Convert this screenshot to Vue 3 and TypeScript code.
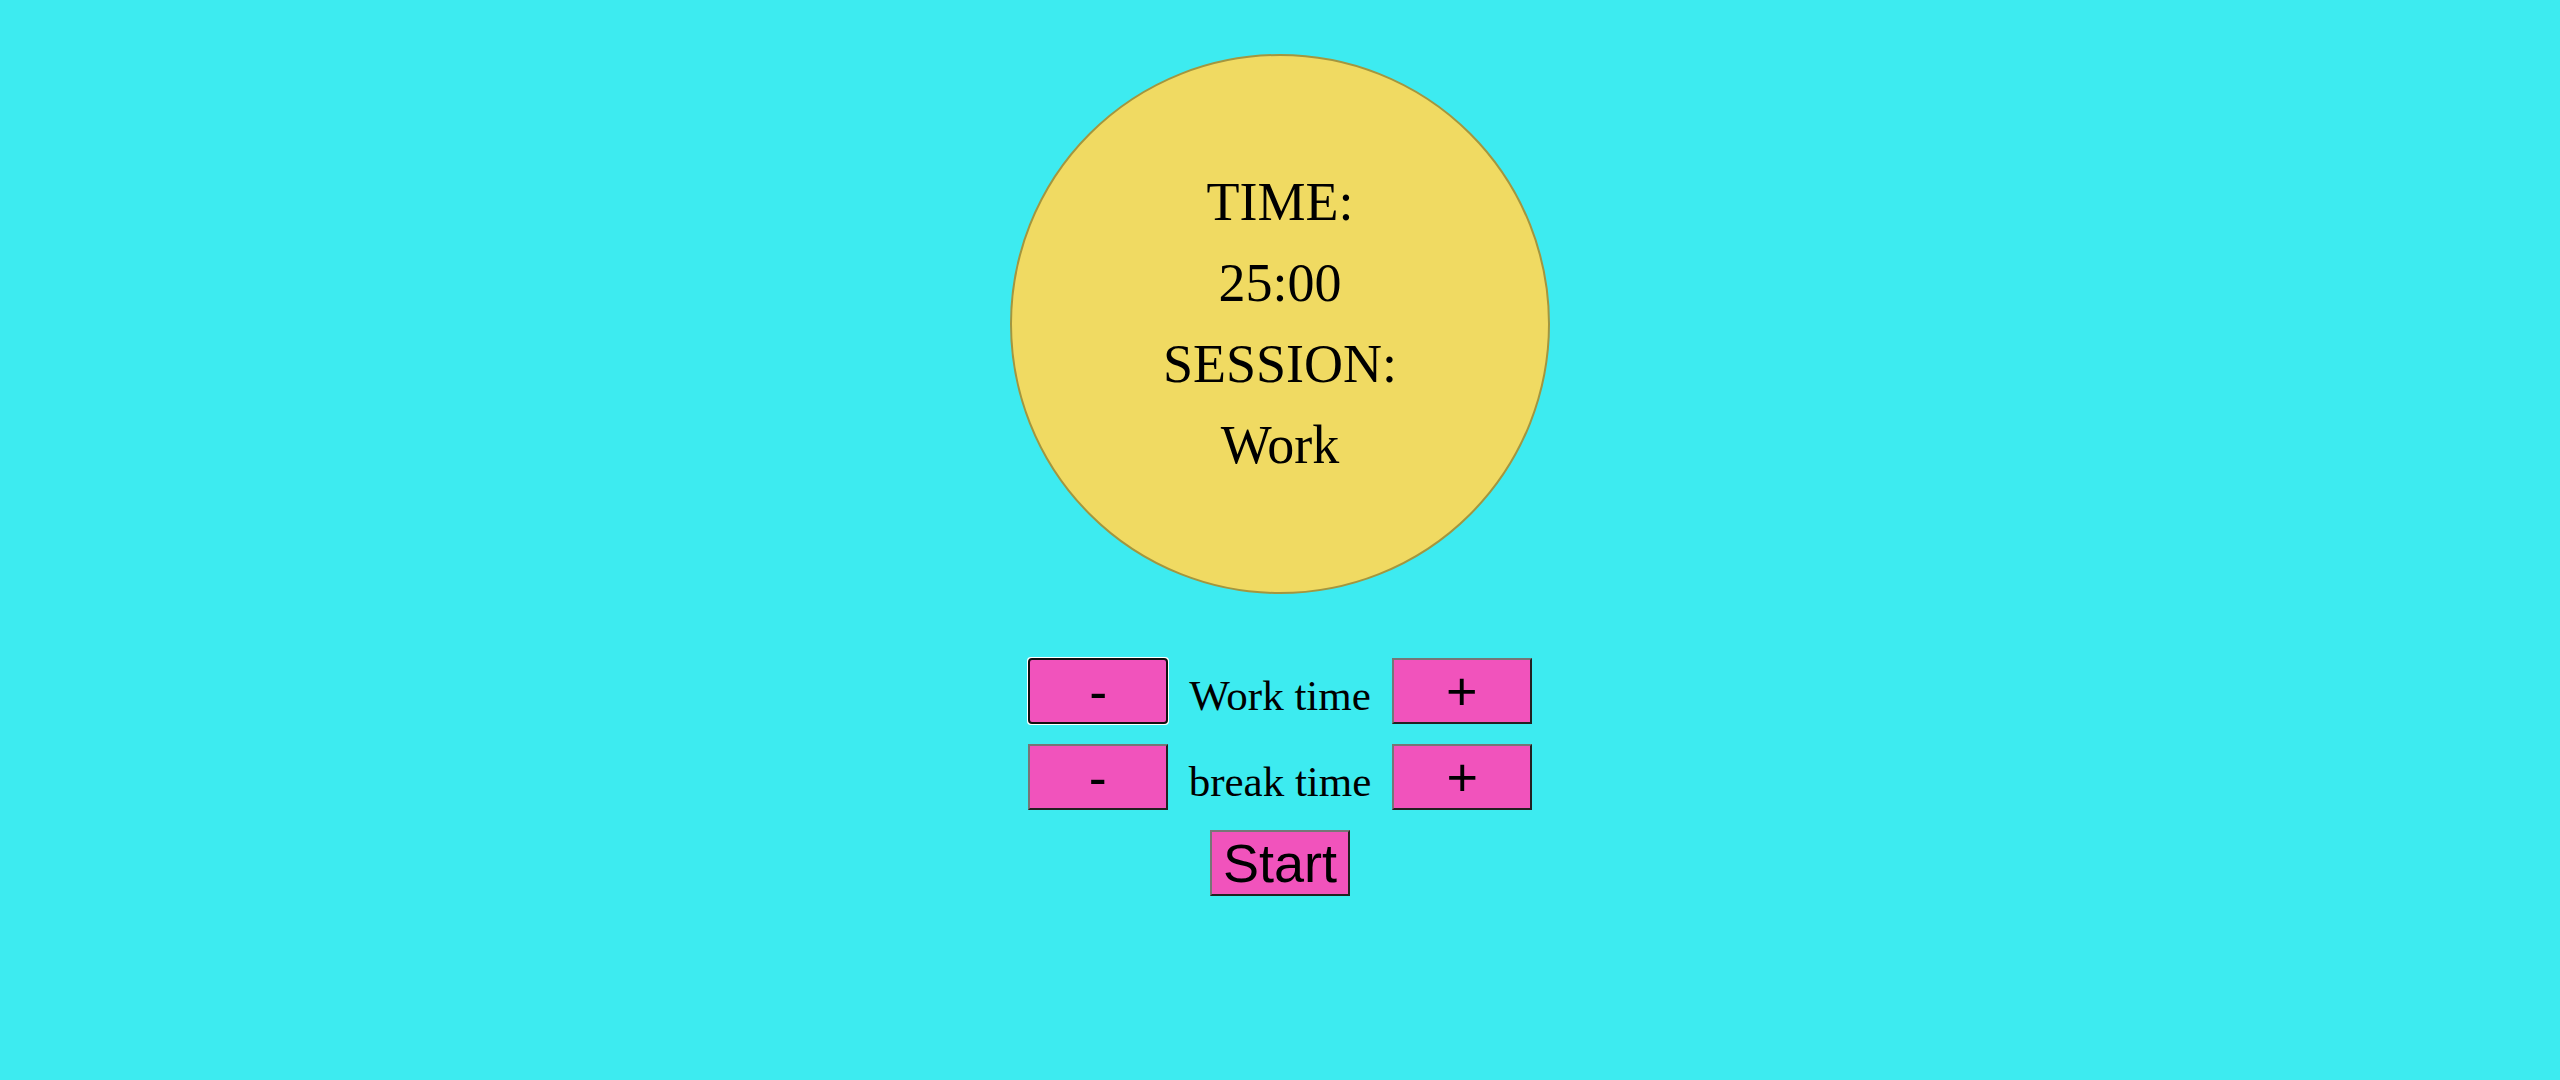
<script setup lang="ts">
import { computed, nextTick, onBeforeUnmount, onMounted, ref } from 'vue'

type Session = 'Work' | 'Break'

const workMinutes = ref(25)
const breakMinutes = ref(5)
const session = ref<Session>('Work')
const secondsLeft = ref(workMinutes.value * 60)
const firstButton = ref<HTMLButtonElement | null>(null)
let timer: number | undefined

const clock = computed(() => {
  const minutes = String(Math.floor(secondsLeft.value / 60)).padStart(2, '0')
  const seconds = String(secondsLeft.value % 60).padStart(2, '0')
  return `${minutes}:${seconds}`
})

function changeWork(step: number) {
  workMinutes.value = Math.max(1, workMinutes.value + step)
  if (session.value === 'Work' && timer === undefined) secondsLeft.value = workMinutes.value * 60
}

function changeBreak(step: number) {
  breakMinutes.value = Math.max(1, breakMinutes.value + step)
  if (session.value === 'Break' && timer === undefined) secondsLeft.value = breakMinutes.value * 60
}

function tick() {
  if (secondsLeft.value > 0) {
    secondsLeft.value -= 1
    return
  }
  session.value = session.value === 'Work' ? 'Break' : 'Work'
  secondsLeft.value = (session.value === 'Work' ? workMinutes.value : breakMinutes.value) * 60
}

function start() {
  if (timer === undefined) timer = window.setInterval(tick, 1000)
}

onMounted(async () => {
  await nextTick()
  firstButton.value?.focus()
})
onBeforeUnmount(() => window.clearInterval(timer))
</script>

<template>
  <main class="pomodoro">
    <section class="dial">
      <div>TIME:</div>
      <div>{{ clock }}</div>
      <div>SESSION:</div>
      <div>{{ session }}</div>
    </section>
    <section class="controls">
      <div class="row" role="group" aria-labelledby="work-label">
        <button ref="firstButton" type="button" @click="changeWork(-1)">-</button>
        <span id="work-label">Work time</span>
        <button type="button" @click="changeWork(1)">+</button>
      </div>
      <div class="row" role="group" aria-labelledby="break-label">
        <button type="button" @click="changeBreak(-1)">-</button>
        <span id="break-label">break time</span>
        <button type="button" @click="changeBreak(1)">+</button>
      </div>
      <button type="button" @click="start">Start</button>
    </section>
  </main>
</template>

<style>
body {
  background: #3debf0;
}
</style>

<style scoped>
.pomodoro {
  display: flex;
  flex-direction: column;
  align-items: center;
  gap: 64px;
  padding: 54px 0;
  color: #000;
  font-family: "Liberation Serif", "Times New Roman", serif;
}

.dial {
  box-sizing: border-box;
  display: flex;
  flex-direction: column;
  justify-content: center;
  width: 540px;
  height: 540px;
  border: 2px solid #a3963f;
  border-radius: 50%;
  background: #f0da62;
  font-size: 54px;
  line-height: 81px;
  text-align: center;
}

.controls {
  display: flex;
  flex-direction: column;
  align-items: center;
  gap: 20px;
}

.row {
  display: flex;
  align-items: baseline;
  gap: 21px;
  font-size: 43px;
  line-height: 50px;
}

button {
  box-sizing: border-box;
  width: 140px;
  height: 66px;
  padding: 0;
  border: 2px outset #767676;
  background: #f153bc;
  color: #000;
  font-family: "Liberation Sans", Arial, sans-serif;
  font-size: 54px;
  line-height: 62px;
}
</style>
